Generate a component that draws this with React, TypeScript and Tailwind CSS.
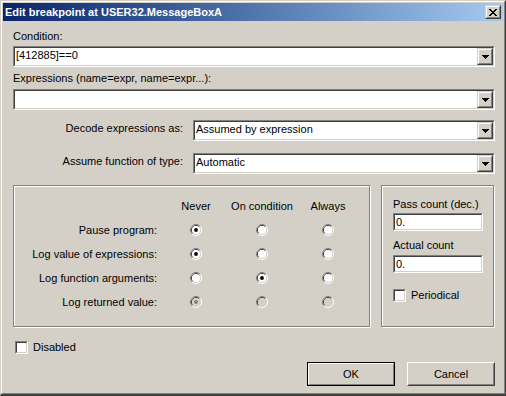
import React from 'react';

// classic Win2k bevel helpers
const sunkenOuter = 'border border-t-[#808080] border-l-[#808080] border-b-white border-r-white';
const sunkenInner = 'border border-t-[#404040] border-l-[#404040] border-b-[#d4d0c8] border-r-[#d4d0c8]';
const raisedOuter = 'border border-t-[#d4d0c8] border-l-[#d4d0c8] border-b-[#404040] border-r-[#404040]';
const raisedInner = 'border border-t-white border-l-white border-b-[#808080] border-r-[#808080]';

const CloseGlyph = () => {
  const rows = ['XX....XX', '.XX..XX.', '..XXXX..', '...XX...', '..XXXX..', '.XX..XX.', 'XX....XX'];
  return (
    <svg width="8" height="7" viewBox="0 0 8 7" shapeRendering="crispEdges">
      {rows.map((r, y) =>
        r.split('').map((c, x) => (c === 'X' ? <rect key={`${x}-${y}`} x={x} y={y} width="1" height="1" fill="#000" /> : null))
      )}
    </svg>
  );
};

const DownArrow = () => (
  <svg width="7" height="4" viewBox="0 0 7 4" shapeRendering="crispEdges">
    <rect x="0" y="0" width="7" height="1" fill="#000" />
    <rect x="1" y="1" width="5" height="1" fill="#000" />
    <rect x="2" y="2" width="3" height="1" fill="#000" />
    <rect x="3" y="3" width="1" height="1" fill="#000" />
  </svg>
);

const Combo: React.FC<{ value?: string; className: string }> = ({ value, className }) => (
  <div className={`h-[21px] ${sunkenOuter} ${className}`}>
    <div className={`h-full flex ${sunkenInner} bg-white`}>
      <div className="flex-1 pl-[1px] pt-[1px] whitespace-nowrap overflow-hidden">{value}</div>
      <div className={`w-[16px] h-full bg-[#d4d0c8] ${raisedOuter}`}>
        <div className={`h-full flex items-center justify-center ${raisedInner}`}>
          <DownArrow />
        </div>
      </div>
    </div>
  </div>
);

const EditBox: React.FC<{ value: string }> = ({ value }) => (
  <div className={`w-[90px] h-[18px] ${sunkenOuter}`}>
    <div className={`h-full ${sunkenInner} bg-white pl-[1px] pt-[1px]`}>{value}</div>
  </div>
);

const CheckBox = () => (
  <div className={`w-[13px] h-[13px] ${sunkenOuter}`}>
    <div className={`h-full ${sunkenInner} bg-white`} />
  </div>
);

const Radio: React.FC<{ checked?: boolean; disabled?: boolean }> = ({ checked, disabled }) => (
  <svg width="12" height="12" viewBox="0 0 12 12">
    <path d="M2.11 9.89 A5.5 5.5 0 0 1 9.89 2.11" fill="none" stroke="#808080" />
    <path d="M9.89 2.11 A5.5 5.5 0 0 1 2.11 9.89" fill="none" stroke="#ffffff" />
    <path d="M2.82 9.18 A4.5 4.5 0 0 1 9.18 2.82" fill="none" stroke="#404040" />
    <path d="M9.18 2.82 A4.5 4.5 0 0 1 2.82 9.18" fill="none" stroke="#d4d0c8" />
    <circle cx="6" cy="6" r="4" fill={disabled ? '#d4d0c8' : '#ffffff'} />
    {checked && <circle cx="6" cy="6" r="1.9" fill={disabled ? '#808080' : '#000000'} />}
  </svg>
);

const Button: React.FC<{ label: string; isDefault?: boolean }> = ({ label, isDefault }) => (
  <div className={`w-[88px] h-[24px] bg-[#d4d0c8] ${isDefault ? 'border border-black' : ''}`}>
    <div className={`h-full ${isDefault ? raisedInner : 'border border-t-white border-l-white border-b-[#404040] border-r-[#404040]'}`}>
      <div className={`h-full flex items-center justify-center ${isDefault ? '' : 'border border-t-[#d4d0c8] border-l-[#d4d0c8] border-b-[#808080] border-r-[#808080]'}`}>
        {label}
      </div>
    </div>
  </div>
);

const actions = [
  { label: 'Pause program:', picked: 0 },
  { label: 'Log value of expressions:', picked: 0 },
  { label: 'Log function arguments:', picked: 1 },
  { label: 'Log returned value:', picked: 0, disabled: true },
];

export default function App() {
  return (
    <div className="w-[506px] h-[396px] bg-[#d4d0c8] text-black text-[11px] leading-[13px] font-['Liberation_Sans',Arial,sans-serif] border border-t-[#d4d0c8] border-l-[#d4d0c8] border-b-[#404040] border-r-[#404040] border-b-2">
      <div className="h-full flex flex-col p-px border border-t-white border-l-white border-b-[#808080] border-r-[#808080]">
        {/* Title bar */}
        <div className="h-[18px] flex items-center bg-linear-to-r from-[#0a246a] to-[#a6caf0] pl-[2px] pr-[2px]">
          <span className="flex-1 font-bold text-white whitespace-nowrap">Edit breakpoint at USER32.MessageBoxA</span>
          <div className={`w-[16px] h-[14px] bg-[#d4d0c8] ${raisedOuter}`}>
            <div className={`h-full flex items-center justify-center ${raisedInner}`}>
              <CloseGlyph />
            </div>
          </div>
        </div>

        <div className="flex-1 flex flex-col pl-[10px] pr-[8px]">
          <div className="mt-[9px] h-[13px]">Condition:</div>
          <Combo className="mt-[3px] w-[482px]" value="[412885]==0" />

          <div className="mt-[5px] h-[13px]">Expressions (name=expr, name=expr...):</div>
          <Combo className="mt-[4px] w-[482px]" />

          <div className="mt-[10px] flex items-start gap-[10px]">
            <div className="w-[170px] pt-[2px] text-right">Decode expressions as:</div>
            <Combo className="w-[302px]" value="Assumed by expression" />
          </div>
          <div className="mt-[12px] flex items-start gap-[10px]">
            <div className="w-[170px] pt-[2px] text-right">Assume function of type:</div>
            <Combo className="w-[302px]" value="Automatic" />
          </div>

          <div className="mt-[11px] flex gap-[11px]">
            <div className="w-[357px] h-[142px] border border-[#808080] shadow-[inset_1px_1px_0_#fff,1px_1px_0_#fff]">
              <div className="pt-[14px] grid grid-cols-[149px_66px_66px_66px]">
                <div className="h-[18px]" />
                <div className="text-center">Never</div>
                <div className="text-center">On condition</div>
                <div className="text-center">Always</div>
                {actions.map((a) => (
                  <React.Fragment key={a.label}>
                    <div className="h-[24px] flex items-center justify-end pr-[6px]">{a.label}</div>
                    {[0, 1, 2].map((i) => (
                      <div key={i} className="h-[24px] flex items-center justify-center">
                        <Radio checked={a.picked === i} disabled={a.disabled} />
                      </div>
                    ))}
                  </React.Fragment>
                ))}
              </div>
            </div>

            <div className="w-[113px] h-[142px] border border-[#808080] shadow-[inset_1px_1px_0_#fff,1px_1px_0_#fff] pl-[11px] pt-[12px]">
              <div className="h-[13px]">Pass count (dec.)</div>
              <div className="mt-[2px]"><EditBox value="0." /></div>
              <div className="mt-[8px] h-[13px]">Actual count</div>
              <div className="mt-[3px]"><EditBox value="0." /></div>
              <div className="mt-[16px] flex items-start gap-[5px]">
                <CheckBox />
                <span>Periodical</span>
              </div>
            </div>
          </div>

          <div className="mt-[14px] ml-[2px] flex items-start gap-[5px]">
            <CheckBox />
            <span>Disabled</span>
          </div>

          <div className="mt-[8px] flex justify-end gap-[12px]">
            <Button label="OK" isDefault />
            <Button label="Cancel" />
          </div>
        </div>
      </div>
    </div>
  );
}
